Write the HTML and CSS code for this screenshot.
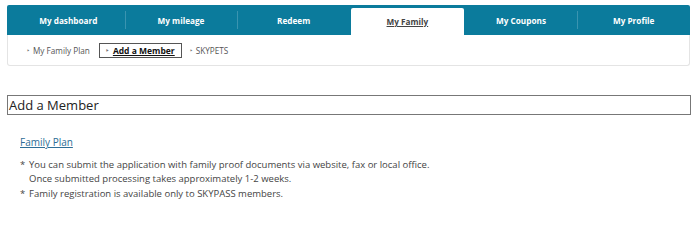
FILE: index.html
```html
<!DOCTYPE html>
<html>
<head>
<meta charset="utf-8">
<link rel="stylesheet" href="styles.css">
</head>
<body>
<div class="wrap">
  <nav class="tabs">
    <a class="tab">My dashboard</a>
    <a class="tab">My mileage</a>
    <a class="tab">Redeem</a>
    <a class="tab active">My Family</a>
    <a class="tab">My Coupons</a>
    <a class="tab">My Profile</a>
  </nav>
  <div class="subnav">
    <a class="sub"><span class="dot">&#8227;</span><span>My Family Plan</span></a>
    <a class="sub current"><span class="dot">&#8227;</span><span class="u">Add a Member</span></a>
    <a class="sub"><span class="dot">&#8227;</span><span>SKYPETS</span></a>
  </div>
</div>
<h1 class="title">Add a Member</h1>
<div class="content">
  <a class="link">Family Plan</a>
  <ul class="notes">
    <li>You can submit the application with family proof documents via website, fax or local office.<br>Once submitted processing takes approximately 1-2 weeks.</li>
    <li>Family registration is available only to SKYPASS members.</li>
  </ul>
</div>
</body>
</html>
```
FILE: styles.css
```css
html, body { margin: 0; padding: 0; background: #fff; }
body { font-family: "Open Sans", "Liberation Sans", sans-serif; color: #333; }
.wrap { margin: 5px 10px 0 7px; }
.tabs {
  display: flex;
  background: #0b7b9c;
  height: 30px;
  padding-left: 5px;
  border-radius: 2px 2px 0 0;
}
.tab {
  flex: 1;
  display: flex;
  align-items: center;
  justify-content: center;
  color: #fff;
  font-size: 8.2px;
  font-weight: 700;
  position: relative;
}
.tab + .tab::before {
  content: "";
  position: absolute;
  left: 0; top: 6px; bottom: 6px;
  width: 1px;
  background: #3a94b0;
}
.tab.active {
  background: #fff;
  color: #444;
  text-decoration: underline;
  margin-top: 3px;
  margin-right: 1px;
  margin-left: 1px;
  border-radius: 2px 2px 0 0;
}
.tab.active::before, .tab.active + .tab::before { display: none; }
.subnav {
  height: 31px;
  border: 1px solid #e4e4e4;
  border-top: none;
  border-radius: 0 0 3px 3px;
  display: flex;
  align-items: center;
  padding-left: 18px;
  gap: 7px;
  box-sizing: border-box;
}
.sub {
  font-size: 8.2px;
  color: #555;
  padding: 1px 0;
  border: 1px solid transparent;
  display: flex;
  align-items: center;
}
.dot { font-size: 7px; color: #777; margin-right: 3px; }
.sub.current {
  border-color: #555;
  padding: 1px 6px 1px 6px;
  font-weight: 700;
  font-size: 8.5px;
  color: #111;
  margin-left: 1px;
}
.sub.current .dot { margin-right: 4px; }
.sub.current .u { text-decoration: underline; }
.title {
  margin: 29px 9px 0 7px;
  border: 1px solid #777;
  font-size: 13px;
  font-weight: 400;
  color: #222;
  line-height: 18px;
  padding: 0 0 0 1px;
}
.content { padding: 20px 0 0 20px; font-size: 9.5px; color: #444; }
.link { color: #2e6d96; text-decoration: underline; font-size: 10px; }
.notes { list-style: none; margin: 9px 0 0 0; padding: 0; line-height: 14px; }
.notes li { padding-left: 9px; text-indent: -9px; margin-bottom: 1px; }
.notes li::before { content: "* "; display: inline-block; width: 9px; text-indent: 0; }
```
